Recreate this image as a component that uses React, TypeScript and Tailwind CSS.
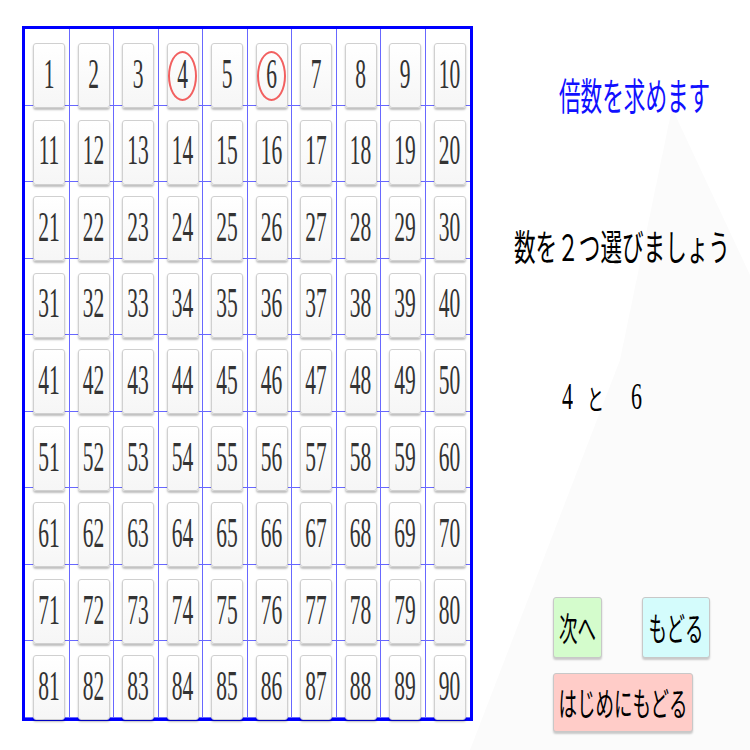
export default function App() {
  const nums = Array.from({ length: 90 }, (_, i) => i + 1);
  const serif = { fontFamily: '"Liberation Serif", "Noto Sans CJK JP", serif' };
  const jp = { fontFamily: '"Noto Sans CJK JP", sans-serif' };
  return (
    <div className="relative w-[750px] h-[750px] bg-white overflow-hidden flex items-start">
      <svg className="absolute inset-0" width="750" height="750">
        <polygon points="672,108 750,275 750,750 470,750 620,360" fill="#fbfbfb" />
      </svg>
      <div className="relative ml-[22px] mt-[26px] w-[451px] h-[695px] border-[3px] border-[#0000ff] grid grid-cols-10 grid-rows-9 bg-white shrink-0">
        {nums.map((n) => (
          <div
            key={n}
            className={
              n % 10 !== 0
                ? "relative border-r border-b border-[#6868ff] pl-[8px] pt-[14px]"
                : "relative border-b border-[#6868ff] pl-[8px] pt-[14px]"
            }
          >
            <div className="relative w-[32px] h-[65px] rounded-[3px] border border-[#d0d0d0] bg-gradient-to-b from-white to-[#f6f6f6] shadow-[0_2px_2px_rgba(0,0,0,0.25)] flex items-center justify-center">
              <span className="text-[21.5px] leading-none text-[#333333] scale-y-[1.95] inline-block" style={serif}>
                {n}
              </span>
              {(n === 4 || n === 6) && (
                <div className="absolute left-[0px] top-[7px] w-[29px] h-[50px] rounded-[50%] border-2 border-[#f26060]" />
              )}
            </div>
          </div>
        ))}
      </div>
      <div className="relative flex-1 flex flex-col">
        <div className="mt-[74px] h-[40px] pl-[86px] flex items-center">
          <span className="text-[21.6px] leading-none text-[#1010ff] scale-y-[1.75] inline-block whitespace-nowrap" style={jp}>
            倍数を求めます
          </span>
        </div>
        <div className="mt-[112px] h-[40px] pl-[41px] flex items-center">
          <span className="text-[21.6px] leading-none text-black scale-y-[1.7] inline-block whitespace-nowrap" style={jp}>
            数を２つ選びましょう
          </span>
        </div>
        <div className="mt-[111px] h-[40px] pl-[89px] flex items-center text-black">
          <span className="text-[22px] leading-none scale-y-[1.75] inline-block" style={serif}>4</span>
          <span className="ml-[14px] text-[17px] leading-none scale-y-[1.7] inline-block" style={jp}>と</span>
          <span className="ml-[27px] text-[22px] leading-none scale-y-[1.75] inline-block" style={serif}>6</span>
        </div>
        <div className="mt-[180px] pl-[80px] flex gap-[40px]">
          <div className="w-[49px] h-[61px] rounded-[3px] border border-[#c8c8c8] bg-[#d4fccc] shadow-[0_2px_2px_rgba(0,0,0,0.2)] flex items-center justify-center">
            <span className="text-[18.5px] leading-none text-black scale-y-[1.8] inline-block whitespace-nowrap" style={jp}>次へ</span>
          </div>
          <div className="w-[68px] h-[61px] rounded-[3px] border border-[#c8c8c8] bg-[#d4fcfc] shadow-[0_2px_2px_rgba(0,0,0,0.2)] flex items-center justify-center">
            <span className="text-[18.5px] leading-none text-black scale-y-[1.8] inline-block whitespace-nowrap" style={jp}>もどる</span>
          </div>
        </div>
        <div className="mt-[15px] pl-[80px] flex">
          <div className="w-[140px] h-[59px] rounded-[3px] border border-[#c8c8c8] bg-[#ffccc8] shadow-[0_2px_2px_rgba(0,0,0,0.2)] flex items-center justify-center">
            <span className="text-[18.5px] leading-none text-black scale-y-[1.8] inline-block whitespace-nowrap" style={jp}>はじめにもどる</span>
          </div>
        </div>
      </div>
    </div>
  );
}
